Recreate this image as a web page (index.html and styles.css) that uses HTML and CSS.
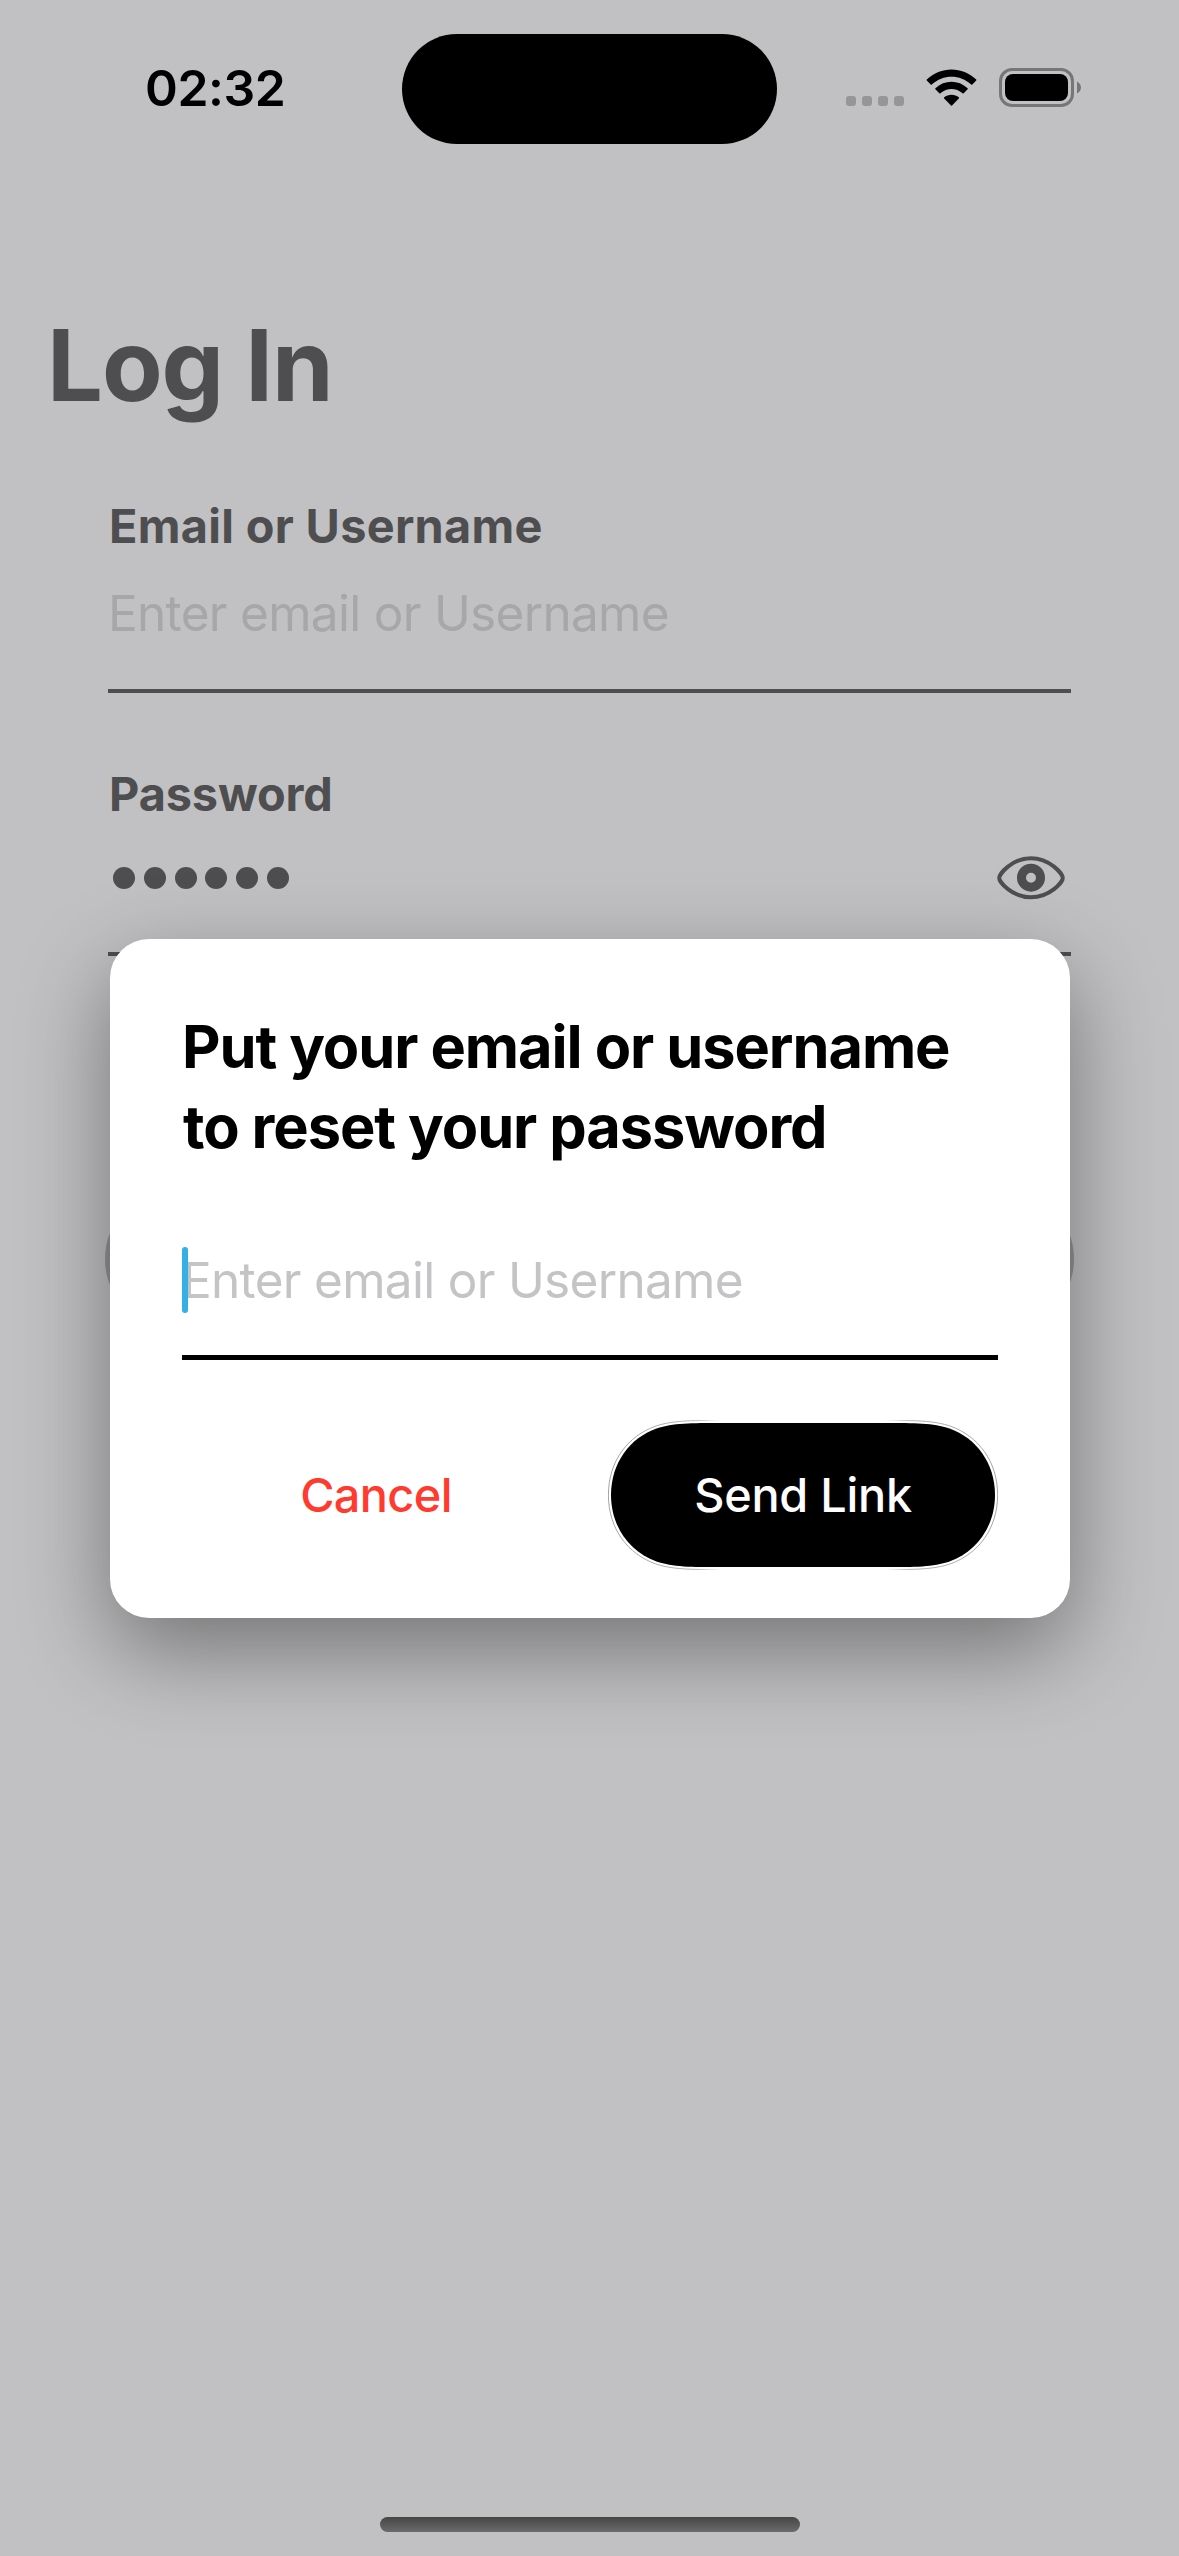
FILE: index.html
```html
<!DOCTYPE html>
<html lang="en">
<head>
<meta charset="utf-8">
<title>Log In</title>
<link rel="stylesheet" href="styles.css">
</head>
<body>
<div class="screen">
  <header class="status-bar">
    <div class="time">02:32</div>
    <div class="island"></div>
    <div class="indicators">
      <div class="cellular"><i></i><i></i><i></i><i></i></div>
      <svg class="wifi" viewBox="0 0 51 38">
        <path d="M.8 10.6C14.5-3 36.500-3 50.200 10.600Q50.700 11.100 50.200 11.600L46.300 15.500Q45.800 16 45.200 15.500C34 5 17 5 5.800 15.500Q5.200 16 4.700 15.500L.8 11.600Q.3 11.100.8 10.600Z"/>
        <path d="M9.400 19.300C18.500 10.700 32.500 10.700 41.600 19.300Q42.100 19.800 41.600 20.300L37.700 24.200Q37.200 24.700 36.600 24.200C30 18.500 21 18.500 14.400 24.200Q13.800 24.700 13.300 24.200L9.400 20.300Q8.900 19.800 9.400 19.300Z"/>
        <path d="M18.200 28.300C22 24.800 29 24.800 32.800 28.300Q33.300 28.800 32.800 29.400L26 36.500Q25.500 37 25 36.500L18.200 29.400Q17.700 28.800 18.200 28.300Z"/>
      </svg>
      <svg class="battery" viewBox="0 0 82 39">
        <rect x="1.500" y="1.500" width="72" height="36" rx="11.500" fill="none" stroke="#767678" stroke-width="3"/>
        <rect x="6" y="6" width="63" height="27" rx="8"/>
        <path d="M78 13.500C83.300 16 83.300 23 78 25.500Z" fill="#767678"/>
      </svg>
    </div>
  </header>

  <main class="login">
    <h1>Log In</h1>
    <form class="fields">
      <div class="field">
        <div class="label label-email">Email or Username</div>
        <div class="value placeholder">Enter email or Username</div>
      </div>
      <div class="field field-password">
        <div class="label">Password</div>
        <div class="value">
          <div class="dots"><i></i><i></i><i></i><i></i><i></i><i></i></div>
          <svg class="eye" viewBox="0 0 68 44">
            <path d="M2.200 22C2.200 18 15 2.200 34 2.200S65.800 18 65.800 22S53 41.300 34 41.300S2.200 26 2.200 22Z" fill="none" stroke="#4e4e50" stroke-width="4"/>
            <circle cx="34" cy="21.700" r="9.500" fill="none" stroke="#4e4e50" stroke-width="9"/>
          </svg>
        </div>
      </div>
    </form>
    <div class="login-button"></div>
  </main>

  <footer class="home-indicator"></footer>

  <section class="dialog">
    <h2>Put your email or username<br><span class="line-two">to reset your password</span></h2>
    <div class="dialog-input">
      <span class="placeholder">Enter email or Username</span>
      <i class="caret"></i>
    </div>
    <div class="actions">
      <div class="cancel">Cancel</div>
      <div class="send">
        <svg class="send-shape" viewBox="-3 -3 390 150">
          <defs>
            <linearGradient id="rim" gradientUnits="userSpaceOnUse" x1="-3" y1="0" x2="387" y2="0">
              <stop offset="0" stop-color="#8c8c8c"/>
              <stop offset=".22" stop-color="#a0a0a0"/>
              <stop offset=".29" stop-color="#fff"/>
              <stop offset=".71" stop-color="#fff"/>
              <stop offset=".78" stop-color="#a0a0a0"/>
              <stop offset="1" stop-color="#8c8c8c"/>
            </linearGradient>
          </defs>
          <path d="M110 -2.600C80 -2.600 61 -2.500 44.500 3.200C17 13 -2.600 38 -2.600 72S17 131 44.500 140.800C61 146.500 80 146.600 110 146.600H274C304 146.600 323 146.500 339.500 140.800C367 131 386.600 106 386.600 72S367 13 339.500 3.200C323 -2.500 304 -2.600 274 -2.600Z" fill="none" stroke="url(#rim)" stroke-width=".8"/>
          <path d="M110 0C80 0 62 0 45.500 5.600C19 15 0 40 0 72S19 129 45.500 138.400C62 144 80 144 110 144H274C304 144 322 144 338.500 138.400C365 129 384 104 384 72S365 15 338.500 5.600C322 0 304 0 274 0Z"/>
        </svg>
        <span>Send Link</span>
      </div>
    </div>
  </section>
</div>
</body>
</html>
```
FILE: styles.css
```css
* {
  box-sizing: border-box;
  margin: 0;
}

body {
  font-family: Inter, "Liberation Sans", sans-serif;
  background: #c1c1c3;
}

.screen {
  position: relative;
  display: flex;
  flex-direction: column;
  width: 1179px;
  height: 2556px;
  overflow: hidden;
  background: #c1c1c3;
  color: #4e4e50;
}

/* Status bar */
.status-bar {
  display: grid;
  grid-template-columns: 402px 375px 1fr;
  height: 177px;
  padding-top: 34px;
  color: #000;
}

.time {
  padding-left: 145px;
  font-size: 49.8px;
  font-weight: 600;
  line-height: 108px;
  letter-spacing: -0.4px;
}

.island {
  height: 110px;
  border-radius: 55px;
  background: #000;
}

.indicators {
  display: flex;
  align-items: flex-start;
  padding: 34px 0 0 69px;
}

.cellular {
  display: flex;
  gap: 6px;
  padding-top: 28px;
}

.cellular i {
  width: 10px;
  height: 10px;
  border-radius: 3px;
  background: #969698;
}

.wifi {
  width: 51px;
  height: 38px;
  margin: 1px 0 0 22px;
}

.battery {
  width: 82px;
  height: 39px;
  margin-left: 22px;
}

/* Login form */
.login {
  flex: 1;
  padding-top: 128px;
}

h1 {
  padding-left: 47px;
  font-size: 99px;
  font-weight: 700;
  line-height: 120px;
  letter-spacing: -1.1px;
}

.fields {
  display: flex;
  flex-direction: column;
  gap: 71px;
  padding: 71px 108px 0;
}

.field {
  display: flex;
  flex-direction: column;
  gap: 22px;
  padding-bottom: 41px;
  border-bottom: 4px solid #4e4e50;
}

.field-password {
  gap: 19px;
  padding-bottom: 39px;
}

.label {
  padding-left: 1px;
  font-size: 46.8px;
  font-weight: 700;
  line-height: 60px;
  letter-spacing: -0.1px;
}

.label-email {
  letter-spacing: 0.33px;
}

.value {
  display: flex;
  align-items: center;
  justify-content: space-between;
  height: 70px;
}

.placeholder {
  color: #a7a7a9;
  font-size: 49.5px;
  letter-spacing: -0.69px;
}

.dots {
  display: flex;
  gap: 8.8px;
  padding-left: 5px;
}

.dots i {
  width: 22px;
  height: 22px;
  border-radius: 50%;
  background: #4e4e50;
}

.eye {
  width: 68px;
  height: 44px;
  margin-right: 6px;
}

.login-button {
  height: 144px;
  margin: 231px 105px 0;
  border-radius: 72px;
  background: #949498;
}

.home-indicator {
  width: 420px;
  height: 15px;
  margin: 0 auto 24px 380px;
  border-radius: 8px;
  background: linear-gradient(#464646, #6a6a6a);
}

/* Reset-password dialog, floating over the login form */
.dialog {
  position: absolute;
  top: 939px;
  left: 110px;
  width: 960px;
  height: 679px;
  padding: 67px 72px 0;
  border-radius: 39px;
  background: #fff;
  box-shadow: 0 32px 90px rgba(0, 0, 0, 0.4);
}

h2 {
  color: #000;
  font-size: 59.5px;
  font-weight: 700;
  line-height: 80px;
  letter-spacing: -1.07px;
  white-space: nowrap;
}

.line-two {
  padding-left: 1px;
}

.dialog-input {
  position: relative;
  height: 113px;
  margin-top: 81px;
  border-bottom: 5px solid #000;
  line-height: 66px;
}

.dialog-input .placeholder {
  color: #c4c4c6;
}

.caret {
  position: absolute;
  top: 0;
  left: 0;
  width: 6px;
  height: 66px;
  border-radius: 3px;
  background: #36aee6;
}

.actions {
  display: grid;
  grid-template-columns: 390px 390px;
  gap: 36px;
  margin-top: 60px;
  font-size: 46.8px;
  font-weight: 500;
  line-height: 150px;
  text-align: center;
}

.cancel {
  padding-right: 2px;
  color: #ff3b30;
  letter-spacing: -0.6px;
}

.send {
  display: grid;
  height: 150px;
  color: #fff;
  letter-spacing: -0.25px;
}

.send > * {
  grid-area: 1 / 1;
}

.send span {
  z-index: 1;
}

.send-shape {
  width: 390px;
  height: 150px;
}
```
